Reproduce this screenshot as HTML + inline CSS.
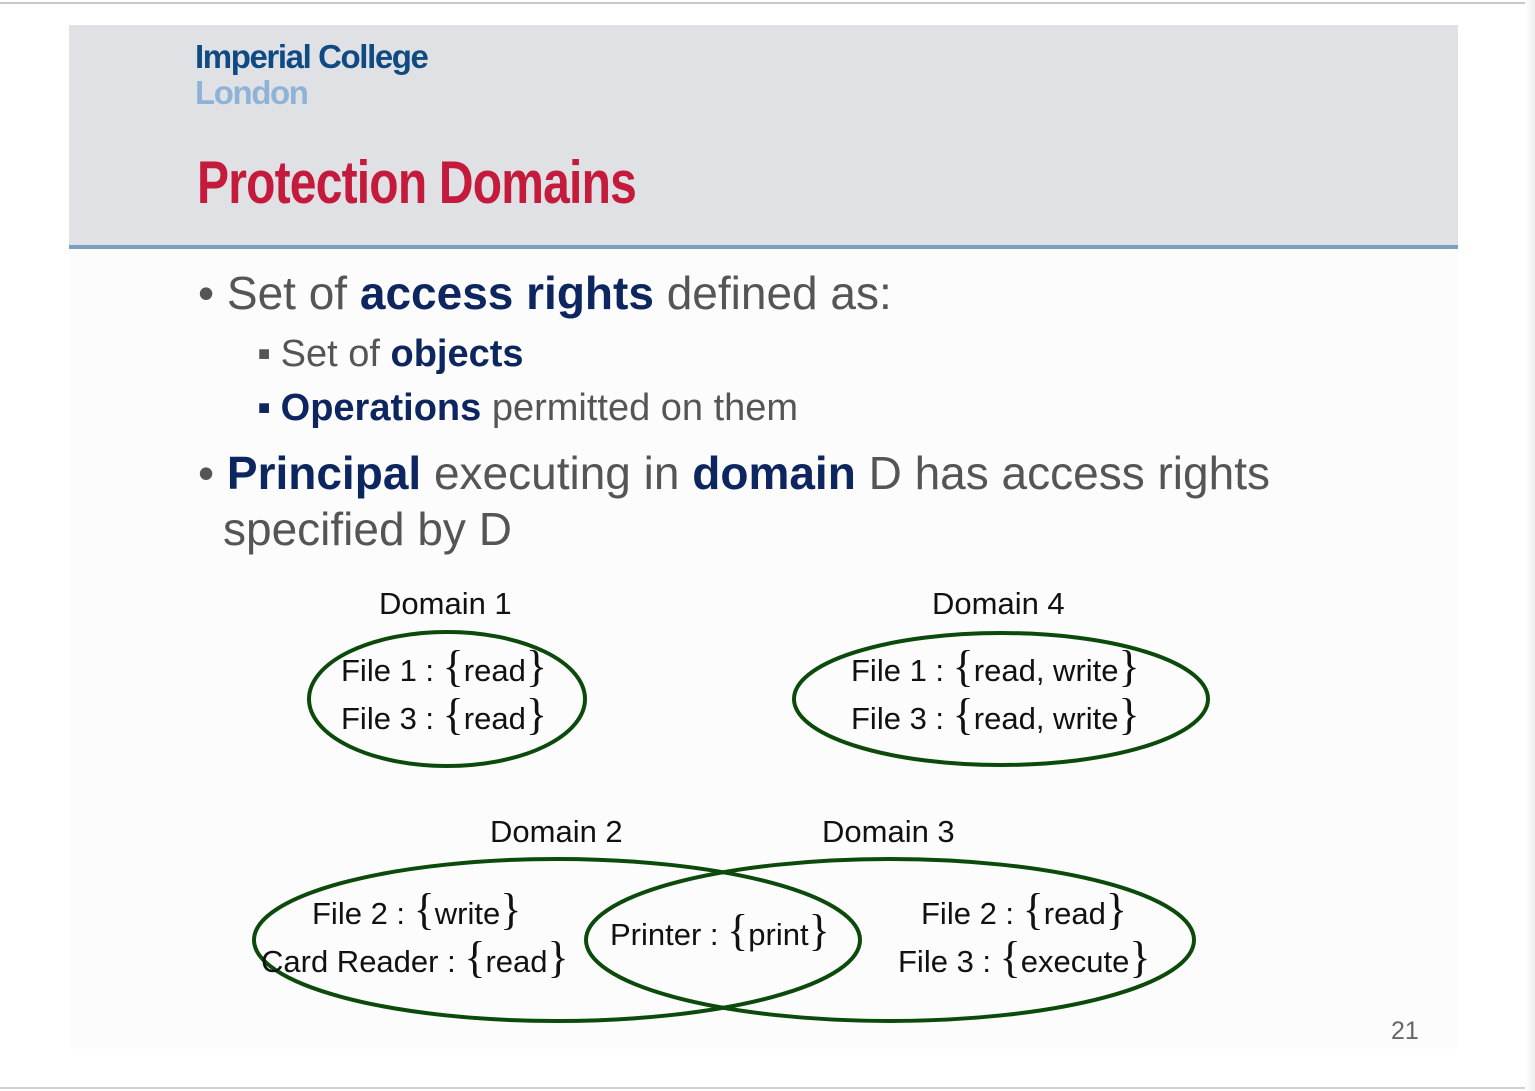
<!DOCTYPE html>
<html><head><meta charset="utf-8"><style>
html,body{margin:0;padding:0}
body{width:1535px;height:1091px;position:relative;background:#fff;overflow:hidden;font-family:"Liberation Sans",sans-serif}
.abs{position:absolute;white-space:nowrap}
.g{color:#555}
.b{color:#0d2660;font-weight:bold}
.d{font-size:31px;color:#111}
.br{font-family:"Liberation Serif",serif;font-size:44px;font-weight:normal;line-height:30px}
</style></head><body>
<div class="abs" style="left:0;top:2px;width:1535px;height:2px;background:#c8c8c8"></div>
<div class="abs" style="left:0;top:1087px;width:1535px;height:2px;background:#d0d0d0"></div>
<div class="abs" style="left:1525px;top:0;width:10px;height:1091px;background:linear-gradient(to right,#fff,#eee)"></div>
<div class="abs" style="left:69px;top:25px;width:1389px;height:220px;background:#e0e1e5"></div>
<div class="abs" style="left:69px;top:245px;width:1389px;height:4px;background:#7d9fbf"></div>
<div class="abs" style="left:69px;top:249px;width:1389px;height:800px;background:#fcfcfc"></div>
<div class="abs" style="left:195px;top:40px;font-size:33px;font-weight:bold;letter-spacing:-1.4px;color:#0f4a82;line-height:34px">Imperial College</div>
<div class="abs" style="left:195px;top:76px;font-size:33px;font-weight:bold;letter-spacing:-1.4px;color:#8fb3d6;line-height:34px">London</div>
<div class="abs" style="left:197px;top:150px;font-family:'Liberation Sans Narrow','Liberation Sans',sans-serif;font-weight:bold;font-size:60px;color:#c41a3c;line-height:66px;transform:scaleX(0.8);transform-origin:left;letter-spacing:-1px">Protection Domains</div>

<div class="abs g" style="left:198px;top:266px;font-size:46px;line-height:54px">•&nbsp;Set of <span class="b">access rights</span> defined as:</div>
<div class="abs g" style="left:258px;top:333px;font-size:38px;line-height:42px"><span style="font-size:20px;vertical-align:6px">■</span>&nbsp;Set of <span class="b">objects</span></div>
<div class="abs g" style="left:258px;top:387px;font-size:38px;line-height:42px"><span style="font-size:20px;vertical-align:6px;color:#0d2660">■</span>&nbsp;<span class="b">Operations</span> permitted on them</div>
<div class="abs g" style="left:198px;top:446px;font-size:46px;line-height:54px">•&nbsp;<span class="b">Principal</span> executing in <span class="b">domain</span> D has access rights</div>
<div class="abs g" style="left:223px;top:502px;font-size:46px;line-height:54px">specified by D</div>

<svg class="abs" style="left:0;top:0" width="1535" height="1091">
<g fill="none" stroke="#0b4a0b" stroke-width="4">
<ellipse cx="447" cy="699" rx="138" ry="67"/>
<ellipse cx="1001" cy="699" rx="207" ry="66"/>
<ellipse cx="557" cy="940" rx="303" ry="81"/>
<ellipse cx="890" cy="940" rx="304" ry="81"/>
</g></svg>

<div class="abs d" style="left:379px;top:586px">Domain 1</div>
<div class="abs d" style="left:932px;top:586px">Domain 4</div>
<div class="abs d" style="left:490px;top:814px">Domain 2</div>
<div class="abs d" style="left:822px;top:814px">Domain 3</div>

<div class="abs d" style="left:341px;top:652px">File 1 : <span class="br">{</span>read<span class="br">}</span></div>
<div class="abs d" style="left:341px;top:700px">File 3 : <span class="br">{</span>read<span class="br">}</span></div>
<div class="abs d" style="left:851px;top:652px">File 1 : <span class="br">{</span>read, write<span class="br">}</span></div>
<div class="abs d" style="left:851px;top:700px">File 3 : <span class="br">{</span>read, write<span class="br">}</span></div>
<div class="abs d" style="left:312px;top:895px">File 2 : <span class="br">{</span>write<span class="br">}</span></div>
<div class="abs d" style="left:261px;top:943px">Card Reader : <span class="br">{</span>read<span class="br">}</span></div>
<div class="abs d" style="left:610px;top:916px">Printer : <span class="br">{</span>print<span class="br">}</span></div>
<div class="abs d" style="left:921px;top:895px">File 2 : <span class="br">{</span>read<span class="br">}</span></div>
<div class="abs d" style="left:898px;top:943px">File 3 : <span class="br">{</span>execute<span class="br">}</span></div>

<div class="abs" style="left:1391px;top:1017px;font-size:25px;color:#666">21</div>
</body></html>
